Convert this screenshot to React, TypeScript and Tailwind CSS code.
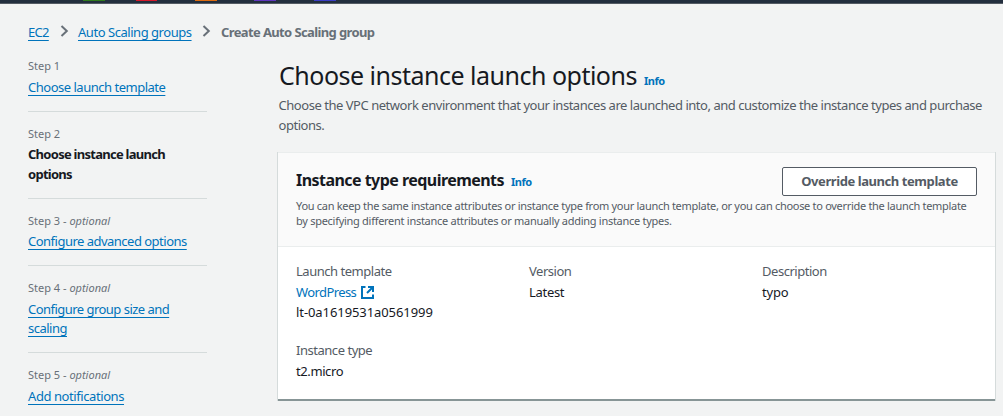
import React from "react";

const LINK =
  "text-[#0073bb] underline decoration-1 underline-offset-[3px] [text-decoration-skip-ink:none]";

function Chevron() {
  return (
    <svg width="9" height="12" viewBox="0 0 9 12" fill="none" stroke="#687078" strokeWidth="2">
      <path d="M1.5 1 L6.8 6 L1.5 11" />
    </svg>
  );
}

function ExternalIcon() {
  return (
    <svg width="13" height="13" viewBox="0 0 13 13" fill="none" stroke="#0073bb" strokeWidth="2">
      <path d="M4.5 1 H1 V12 H12 V8.5" />
      <path d="M7 1 H12 V6 M12 1 L6 7" />
    </svg>
  );
}

type StepProps = {
  label: string;
  optional?: boolean;
  lines: { text: string; spacing: string }[];
  current?: boolean;
  box?: string;
  gap?: string;
  leading?: string;
  last?: boolean;
};

function Step({
  label,
  optional,
  lines,
  current,
  last,
  box = "pb-[14px]",
  gap = "mb-[2px]",
  leading = "leading-5",
}: StepProps) {
  return (
    <li className={`flex flex-col pt-[14px] ${box} ${last ? "" : "border-b border-[#d5dbdb]"}`}>
      <span className={`whitespace-nowrap text-[11px] leading-4 text-[#687078] ${gap}`}>
        {label}
        {optional && (
          <>
            {" - "}
            <i>optional</i>
          </>
        )}
      </span>
      {lines.map((l) => (
        <a
          key={l.text}
          className={`whitespace-nowrap text-[13px] ${leading} ${l.spacing} ${
            current ? "font-bold text-[#16191f]" : LINK
          }`}
        >
          {l.text}
        </a>
      ))}
    </li>
  );
}

function Field({ label, children }: { label: string; children: React.ReactNode }) {
  return (
    <div className="flex flex-col whitespace-nowrap text-[13px] leading-5 text-[#16191f]">
      <span className="mb-px tracking-[-0.47px] text-[#545b64]">{label}</span>
      {children}
    </div>
  );
}

export default function App() {
  return (
    <div className="flex h-[416px] w-[1003px] flex-col overflow-hidden bg-[#f2f3f3] font-['Noto_Sans',sans-serif] text-[#16191f]">
      <header className="flex h-1 shrink-0 items-start border-b border-[#545b64] bg-[#232f3e] pl-[83px]">
        <div className="h-px w-[22px] bg-[#2f7a1c]" />
        <div className="ml-[31px] h-px w-[21px] bg-[#d6182a]" />
        <div className="ml-[38px] h-px w-[22px] bg-[#dd6b10]" />
        <div className="ml-[37px] h-px w-[22px] bg-[#5f35bd]" />
        <div className="ml-[38px] h-px w-[22px] bg-[#3a3cc4]" />
      </header>

      <nav className="mt-[18px] flex h-5 shrink-0 items-center whitespace-nowrap pl-7 text-[13px] leading-5">
        <a className={`w-[21px] tracking-[-0.7px] ${LINK}`}>EC2</a>
        <span className="ml-[11px] w-[18px] -translate-y-px">
          <Chevron />
        </span>
        <a className={`w-[114px] tracking-[-0.46px] ${LINK}`}>Auto Scaling groups</a>
        <span className="ml-[10px] w-[19px] -translate-y-px">
          <Chevron />
        </span>
        <span className="font-bold tracking-[-0.62px] text-[#687078]">Create Auto Scaling group</span>
      </nav>

      <div className="flex min-h-0 flex-1">
        <ol className="ml-7 w-[179px] shrink-0 pt-[2px]">
          <Step
            label="Step 1"
            gap="mb-[3px]"
            lines={[{ text: "Choose launch template", spacing: "tracking-[-0.49px]" }]}
          />
          <Step
            label="Step 2"
            current
            lines={[
              { text: "Choose instance launch", spacing: "tracking-[-0.73px]" },
              { text: "options", spacing: "tracking-[-0.73px]" },
            ]}
          />
          <Step
            label="Step 3"
            optional
            lines={[{ text: "Configure advanced options", spacing: "tracking-[-0.51px]" }]}
          />
          <Step
            label="Step 4"
            optional
            gap="mb-1"
            leading="leading-[19px]"
            lines={[
              { text: "Configure group size and", spacing: "tracking-[-0.53px]" },
              { text: "scaling", spacing: "tracking-[-0.5px]" },
            ]}
          />
          <Step
            label="Step 5"
            optional
            last
            gap="mb-[3px]"
            lines={[{ text: "Add notifications", spacing: "tracking-[-0.42px]" }]}
          />
        </ol>

        <main className="ml-[71px] flex w-[717px] shrink-0 flex-col pt-[18px]">
          <div className="flex items-baseline whitespace-nowrap pl-px">
            <h1 className="w-[365px] text-[25px] leading-[30px] tracking-[-0.5px]">Choose instance launch options</h1>
            <a className="text-[11px] font-bold tracking-[-0.5px] text-[#0073bb]">Info</a>
          </div>
          <p className="mt-[5px] whitespace-nowrap pl-[0.5px] text-[13px] leading-5 tracking-[-0.463px] text-[#545b64]">
            Choose the VPC network environment that your instances are launched into, and customize the instance types
            and purchase
            <br />
            options.
          </p>

          <section className="mt-[17px] flex h-[249px] shrink-0 flex-col border-b-2 border-t border-b-[#879596] border-t-[#eaeded] bg-white shadow-[-1px_0_0_0_#d5dbdb,1px_0_0_0_#d5dbdb]">
            <div className="h-[94px] shrink-0 border-b border-[#eaeded] bg-[#fafafa] px-[18px] pt-[13px]">
              <div className="flex h-[30px] items-center justify-between">
                <div className="flex items-baseline whitespace-nowrap pb-[2px]">
                  <h2 className="w-[215px] text-[16px] font-bold leading-5 tracking-[-0.54px]">
                    Instance type requirements
                  </h2>
                  <a className="text-[11px] font-bold tracking-[-0.5px] text-[#0073bb]">Info</a>
                </div>
                <button className="h-[29px] w-[195px] whitespace-nowrap rounded-[2px] border border-[#545b64] bg-white pt-px text-[13px] font-bold tracking-[-0.43px] text-[#545b64]">
                  Override launch template
                </button>
              </div>
              <p className="mt-[2px] whitespace-nowrap text-[11px] leading-[15px] tracking-[-0.3px] text-[#545b64]">
                You can keep the same instance attributes or instance type from your launch template, or you can choose
                to override the launch template
                <br />
                <span className="tracking-[-0.28px]">
                  by specifying different instance attributes or manually adding instance types.
                </span>
              </p>
            </div>
            <div className="grid grid-cols-[233px_233px_1fr] gap-y-[18px] pl-[18px] pt-[14px]">
              <Field label="Launch template">
                <a className="flex items-center gap-1 text-[#0073bb]">
                  <span className="w-[61px] tracking-[-0.6px]">WordPress</span>
                  <ExternalIcon />
                </a>
                <span className="tracking-[-0.08px]">lt-0a1619531a0561999</span>
              </Field>
              <Field label="Version">
                <span className="tracking-[-0.3px]">Latest</span>
              </Field>
              <Field label="Description">
                <span className="tracking-[-0.2px]">typo</span>
              </Field>
              <Field label="Instance type">
                <span className="tracking-[-0.4px]">t2.micro</span>
              </Field>
            </div>
          </section>
        </main>
      </div>
    </div>
  );
}
